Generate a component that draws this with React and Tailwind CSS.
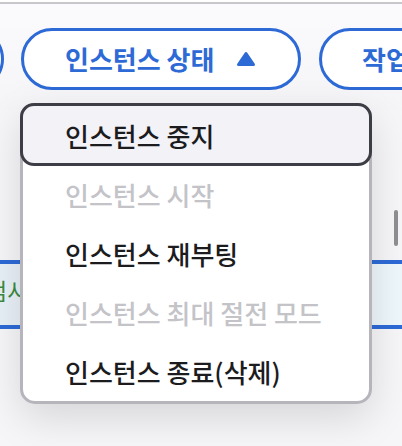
import { useState } from 'react'

const items = [
  { label: '인스턴스 중지', enabled: true },
  { label: '인스턴스 시작', enabled: false },
  { label: '인스턴스 재부팅', enabled: true },
  { label: '인스턴스 최대 절전 모드', enabled: false },
  { label: '인스턴스 종료(삭제)', enabled: true },
]

const font = { fontFamily: '"Noto Sans CJK KR", "Noto Sans", sans-serif' }

function TriangleUp() {
  return (
    <svg width="20" height="16" viewBox="0 0 20 16" className="shrink-0">
      <path d="M10 2.5 L17.5 13.5 L2.5 13.5 Z" fill="#2d6ad6" stroke="#2d6ad6" strokeWidth="3" strokeLinejoin="round" />
    </svg>
  )
}

export default function App() {
  const [active] = useState(0)

  return (
    <div className="relative w-[402px] h-[446px] overflow-hidden bg-[#f6f6f8]" style={font}>
      {/* top bar edge */}
      <div className="h-[4px] bg-white border-b-2 border-[#c7c7cc]" />

      <div className="bg-gradient-to-b from-[#fbfbfd] to-[#f5f5f7]">
        {/* filter pills */}
        <div className="flex items-center gap-[17px] pt-[24px] pb-[20px] -ml-[300px] whitespace-nowrap">
          <div className="h-[62px] w-[304px] shrink-0 rounded-full border-[3px] border-[#2d6ad6] bg-white" />
          <button className="h-[62px] w-[280px] shrink-0 flex items-center gap-[22px] pl-[41px] rounded-full border-[3px] border-[#2d6ad6] bg-white text-[#2d6ad6] text-[26px] font-semibold leading-none">
            <span>인스턴스 상태</span>
            <TriangleUp />
          </button>
          <button className="h-[62px] w-[200px] shrink-0 flex items-center pl-[40px] rounded-full border-[3px] border-[#2d6ad6] bg-white text-[#2d6ad6] text-[26px] font-semibold leading-none ml-px">
            <span>작업</span>
          </button>
        </div>
      </div>

      {/* list content behind the menu */}
      <div className="relative h-[150px]">
        <div className="absolute right-[4px] top-[100px] w-[4px] h-[36px] rounded-sm bg-[#8e8e93]" />
      </div>
      <div className="h-[69px] border-y-4 border-[#2d6ad6] bg-gradient-to-r from-[#e8f0f7] to-[#eef7fb] flex items-center pb-[8px] -ml-[14px]">
        <span className="text-[23px] text-[#3b8b3f]">검사 결과</span>
      </div>

      {/* dropdown menu */}
      <div className="absolute left-[20px] top-[103px] w-[352px] rounded-[15px] border-[3px] border-[#b6b5bb] bg-white shadow-[0_14px_40px_rgba(0,0,0,0.13)]">
        {items.map((item, i) => (
          <div key={item.label} className="relative h-[59px] flex items-center pl-[42px]">
            {i === active && (
              <div className="absolute -top-[3px] -left-[3px] -right-[3px] -bottom-[1px] rounded-[14px] border-[3px] border-[#3d3d45] bg-[#f2f2f7]" />
            )}
            <span className={`relative text-[26px] font-medium leading-none ${item.enabled ? 'text-[#1c1c1e]' : 'text-[#c3c3c8]'}`}>
              {item.label}
            </span>
          </div>
        ))}
      </div>
    </div>
  )
}
